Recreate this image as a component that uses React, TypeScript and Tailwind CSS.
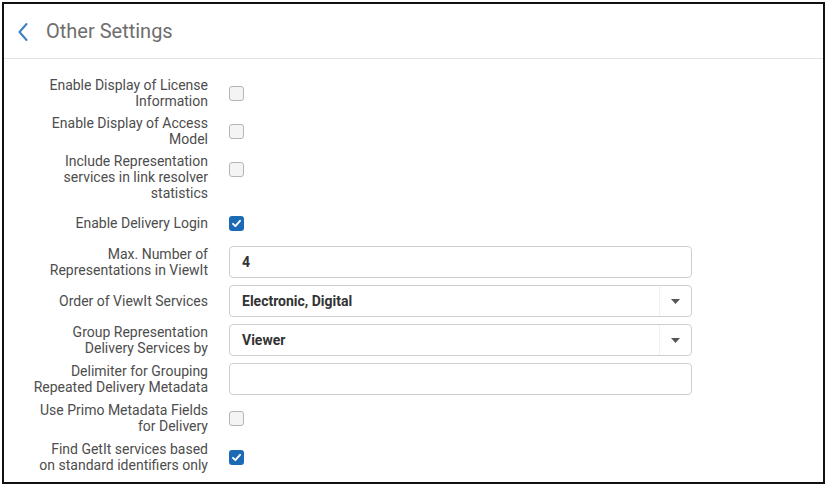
import React from 'react'

type Row = {
  label: string[]
  kind: 'check' | 'input' | 'select'
  checked?: boolean
  value?: string
  gap: string
}

const rows: Row[] = [
  { label: ['Enable Display of License', 'Information'], kind: 'check', gap: 'mt-0' },
  { label: ['Enable Display of Access', 'Model'], kind: 'check', gap: 'mt-[6px]' },
  { label: ['Include Representation', 'services in link resolver', 'statistics'], kind: 'check', gap: 'mt-[6px]' },
  { label: ['Enable Delivery Login'], kind: 'check', checked: true, gap: 'mt-[6px]' },
  { label: ['Max. Number of', 'Representations in ViewIt'], kind: 'input', value: '4', gap: 'mt-[7px]' },
  { label: ['Order of ViewIt Services'], kind: 'select', value: 'Electronic, Digital', gap: 'mt-[7px]' },
  { label: ['Group Representation', 'Delivery Services by'], kind: 'select', value: 'Viewer', gap: 'mt-[7px]' },
  { label: ['Delimiter for Grouping', 'Repeated Delivery Metadata'], kind: 'input', value: '', gap: 'mt-[7px]' },
  { label: ['Use Primo Metadata Fields', 'for Delivery'], kind: 'check', gap: 'mt-[7px]' },
  { label: ['Find GetIt services based', 'on standard identifiers only'], kind: 'check', checked: true, gap: 'mt-[7px]' },
]

function Checkbox({ checked }: { checked?: boolean }) {
  if (checked) {
    return (
      <div className="w-[15px] h-[15px] rounded-[3px] bg-[#1b6ab5] flex items-center justify-center">
        <svg width="11" height="11" viewBox="0 0 11 11">
          <polyline points="2,5.8 4.4,8.2 9,2.8" fill="none" stroke="#fff" strokeWidth="1.9" strokeLinecap="round" strokeLinejoin="round" />
        </svg>
      </div>
    )
  }
  return <div className="w-[15px] h-[15px] rounded-[3px] border border-[#b5b5b5] bg-[#f4f4f4]" />
}

function Control({ row }: { row: Row }) {
  if (row.kind === 'check') return <Checkbox checked={row.checked} />
  return (
    <div className="w-[463px] h-[32px] rounded-[4px] border border-[#cfcfcf] bg-white flex items-center">
      <span className="flex-1 pl-[12px] text-[14px] font-bold text-[#333]">{row.value}</span>
      {row.kind === 'select' && (
        <div className="w-[32px] h-full border-l border-[#f0f0f0] flex items-center justify-center">
          <svg width="9" height="5" viewBox="0 0 9 5">
            <polygon points="0,0 9,0 4.5,5" fill="#555" />
          </svg>
        </div>
      )}
    </div>
  )
}

export default function App() {
  return (
    <div className="w-[834px] h-[490px] bg-white pt-[2px] pl-[2px] font-['Roboto',sans-serif]">
      <div className="w-[823px] h-[482px] border-2 border-[#111] flex flex-col">
        <div className="h-[55px] flex items-center border-b border-[#e2e2e2] pl-[13px]">
          <svg width="12" height="20" viewBox="0 0 12 20" className="mt-[1px]">
            <polyline points="9.5,2 2.5,10 9.5,18" fill="none" stroke="#3d7fc0" strokeWidth="2" strokeLinecap="round" strokeLinejoin="round" />
          </svg>
          <span className="ml-[17px] text-[20px] text-[#6e6e6e]">Other Settings</span>
        </div>
        <div className="flex flex-col pt-[18px] pl-[24px]">
          {rows.map((row, i) => (
            <div key={i} className={`flex items-start ${row.gap}`}>
              <div className="w-[180px] min-h-[32px] flex flex-col justify-center text-right text-[14px] leading-[16px] text-[#4d4d4d]">
                {row.label.map((l, j) => (
                  <div key={j}>{l}</div>
                ))}
              </div>
              <div className="ml-[21px] h-[32px] flex items-center">
                <Control row={row} />
              </div>
            </div>
          ))}
        </div>
      </div>
    </div>
  )
}
